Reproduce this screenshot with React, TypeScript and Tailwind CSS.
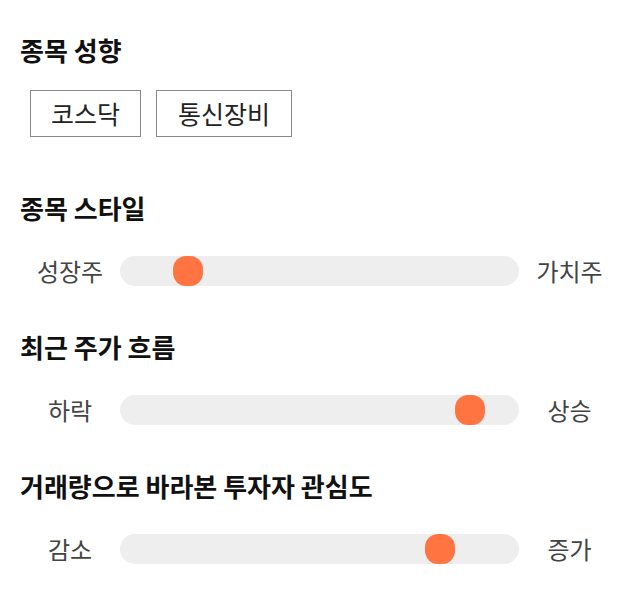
import React from "react"

const font = { fontFamily: '"Noto Sans CJK KR", "Noto Sans", sans-serif' }

type Slider = { title: string; left: string; right: string; pos: number }

const SLIDERS: Slider[] = [
  { title: "종목 스타일", left: "성장주", right: "가치주", pos: 53 },
  { title: "최근 주가 흐름", left: "하락", right: "상승", pos: 335 },
  { title: "거래량으로 바라본 투자자 관심도", left: "감소", right: "증가", pos: 305 },
]

function SliderRow({ s, first }: { s: Slider; first: boolean }) {
  return (
    <div className={first ? "mt-[53px]" : "mt-[43px]"}>
      <h2 className="text-[26px] leading-[36px] font-bold text-[#111]">{s.title}</h2>
      <div className="mt-[30px] flex items-center h-[30px]">
        <div className="w-[100px] text-center text-[24px] text-[#444]">{s.left}</div>
        <div className="relative w-[399px] h-[30px] rounded-full bg-[#eeeeee]">
          <div className="absolute top-0 w-[30px] h-[30px] rounded-[44%] bg-[#ff7440]" style={{ left: s.pos }} />
        </div>
        <div className="w-[101px] text-center text-[24px] text-[#444]">{s.right}</div>
      </div>
    </div>
  )
}

export default function App() {
  return (
    <div className="w-[640px] h-[606px] bg-white px-5 pt-8" style={font}>
      <h2 className="text-[26px] leading-[36px] font-bold text-[#111]">종목 성향</h2>
      <div className="mt-[22px] ml-[10px] flex gap-[15px]">
        <div className="h-[47px] px-[20px] flex items-center border border-[#888] text-[25px] text-[#222]">코스닥</div>
        <div className="h-[47px] px-[21px] flex items-center border border-[#888] text-[25px] text-[#222]">통신장비</div>
      </div>
      {SLIDERS.map((s, i) => (
        <SliderRow key={s.title} s={s} first={i === 0} />
      ))}
    </div>
  )
}
